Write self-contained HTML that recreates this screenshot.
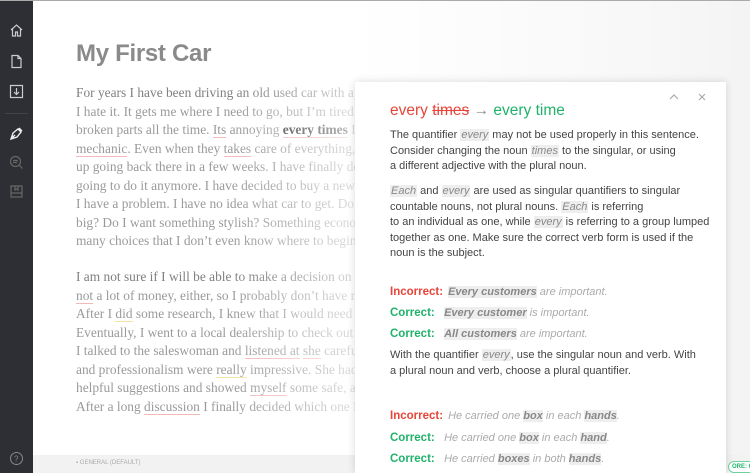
<!DOCTYPE html>
<html><head><style>
*{margin:0;padding:0;box-sizing:border-box}
body{width:750px;height:473px;overflow:hidden;background:#fff;position:relative;font-family:"Liberation Sans",sans-serif}
.top{position:absolute;left:0;top:0;width:750px;height:1px;background:#aaa}
.side{position:absolute;left:0;top:1px;width:33px;height:472px;background:#2d2f34}
.side svg{position:absolute;left:9px}
.main{position:absolute;left:33px;top:1px;width:717px;height:472px;background:linear-gradient(90deg,#fff 0,#fff 320px,#f8f8f8 600px,#f4f4f4)}
h1{position:absolute;left:76px;top:40px;font-size:24px;color:#8a8a8a;font-weight:bold;letter-spacing:-0.3px}
.txt{position:absolute;left:76px;font-family:"Liberation Serif",serif;font-size:13.4px;line-height:18.5px;color:#9a9a9a;white-space:nowrap;width:290px;overflow:hidden}
.txt .d{color:#808080}
.u{border-bottom:1.5px solid #f3b9b9}
.y{border-bottom:1.5px solid #f4e4a0}
.fade{position:absolute;left:230px;top:80px;width:130px;height:340px;background:linear-gradient(90deg,rgba(255,255,255,0),rgba(255,255,255,.7))}
.bot{position:absolute;left:33px;top:455px;width:717px;height:18px;background:#f2f2f2;font-size:6px;color:#aaa;padding:5px 0 0 43px}
.panel{position:absolute;left:355px;top:82px;width:371px;height:391px;background:#fff;box-shadow:0 0 8px rgba(0,0,0,.15);color:#444;font-size:11px}
.panel p{position:absolute;left:35px;line-height:15.6px;white-space:nowrap}
.h{background:#eee;color:#888;font-style:italic;padding:0 1px}
.ti{position:absolute;left:35px;top:20px;font-size:15.5px}
.r{color:#e8443a}.g{color:#20b26a}
.lab{font-weight:bold;display:inline-block;width:55px;font-size:11.5px}
.ex{color:#aaa;font-style:italic}
.ex b{background:#eee;color:#888}
.score{position:absolute;left:728px;top:461px;width:28px;height:12px;border:1px solid #6cd29c;border-radius:7px;font-size:6px;color:#20b26a;font-weight:bold;padding:2px 0 0 3px;background:#fff;white-space:nowrap;overflow:hidden}
</style></head><body>
<div class="top"></div>
<div class="side">
<svg style="top:22px" width="15" height="15" viewBox="0 0 15 15" fill="none" stroke="#ccc" stroke-width="1.2"><path d="M2 7L7.5 2 13 7M3.5 6v7h3v-4h2v4h3V6"/></svg>
<svg style="top:53px" width="15" height="15" viewBox="0 0 15 15" fill="none" stroke="#ccc" stroke-width="1.2"><path d="M3 1.5h6l3 3v9H3z M9 1.5v3h3"/></svg>
<svg style="top:83px" width="15" height="15" viewBox="0 0 15 15" fill="none" stroke="#ccc" stroke-width="1.2"><path d="M1.5 1.5h12v12h-12z M7.5 4v6 M5 8l2.5 2.5L10 8"/></svg>
<div style="position:absolute;left:5px;top:112px;width:23px;height:1px;background:#444"></div>
<svg style="top:125px" width="15" height="15" viewBox="0 0 15 15" fill="none" stroke="#eee" stroke-width="1.4"><path d="M2 13l2-6 5-4 3 3-4 5z M2 13l4-4 M10 2l3 3"/></svg>
<svg style="top:154px" width="15" height="15" viewBox="0 0 15 15" fill="none" stroke="#666" stroke-width="1.2"><circle cx="6.5" cy="6.5" r="5"/><path d="M10 10l3.5 3.5 M4 5.5h5M4 7.5h4"/></svg>
<svg style="top:183px" width="15" height="15" viewBox="0 0 15 15" fill="none" stroke="#666" stroke-width="1.2"><path d="M2 2h11v11H2z M2 9h11 M6 2v4l1.5-1 1.5 1V2"/></svg>
<svg style="top:450px" width="15" height="15" viewBox="0 0 15 15" fill="none" stroke="#888" stroke-width="1"><circle cx="7.5" cy="7.5" r="6"/><text x="5" y="10.5" font-size="8" fill="#888" stroke="none" font-family="Liberation Sans">?</text></svg>
</div>
<div class="main"></div>
<h1>My First Car</h1>
<div class="txt" style="top:84px"><span class="d">For years I have been driving an old used car with a l</span><br>I hate it. It gets me where I need to go, but I’m tired o<br>broken parts all the time. <span class="u">Its</span> annoying <b class="u" style="color:#333">every times</b> I<br><span class="u">mechanic</span>. Even when they <span class="u">takes</span> care of everything,<br>up going back there in a few weeks. I have finally dec<br>going to do it anymore. I have decided to buy a new c<br>I have a problem. I have no idea what car to get. Do I<br>big? Do I want something stylish? Something econom<br>many choices that I don’t even know where to begin</div>
<div class="txt" style="top:268px"><span class="d">I am not sure if I will be able to make a decision on m</span><br><span class="u">not</span> a lot of money, either, so I probably don’t have m<br>After I <span class="y">did</span> some research, I knew that I would need s<br>Eventually, I went to a local dealership to check out s<br>I talked to the saleswoman and <span class="u">listened at</span> <span class="u">she</span> carefu<br>and professionalism were <span class="y">really</span> impressive. She had<br>helpful suggestions and showed <span class="u">myself</span> some safe, af<br>After a long <span class="u">discussion</span> I finally decided which one I w</div>
<div class="fade"></div>
<div class="bot">▪ GENERAL (DEFAULT)</div>
<div class="panel">
<svg style="position:absolute;left:314px;top:12px" width="10" height="6" fill="none" stroke="#aaa" stroke-width="1.2"><path d="M1 5l4-4 4 4"/></svg>
<svg style="position:absolute;left:343px;top:11px" width="8" height="8" fill="none" stroke="#aaa" stroke-width="1.2"><path d="M1 1l6 6M7 1L1 7"/></svg>
<div class="ti"><span class="r">every <s>times</s></span> <span style="color:#888">→</span> <span class="g">every time</span></div>
<p style="top:46px">The quantifier <span class="h">every</span> may not be used properly in this sentence.<br>Consider changing the noun <span class="h">times</span> to the singular, or using<br>a different adjective with the plural noun.</p>
<p style="top:102px"><span class="h">Each</span> and <span class="h">every</span> are used as singular quantifiers to singular<br>countable nouns, not plural nouns. <span class="h">Each</span> is referring<br>to an individual as one, while <span class="h">every</span> is referring to a group lumped<br>together as one. Make sure the correct verb form is used if the<br>noun is the subject.</p>
<p style="top:203px"><span class="lab r">Incorrect:</span> <span class="ex"><b>Every customers</b> are important.</span></p>
<p style="top:224px"><span class="lab g" style="width:51px">Correct:</span> <span class="ex"><b>Every customer</b> is important.</span></p>
<p style="top:245px"><span class="lab g" style="width:51px">Correct:</span> <span class="ex"><b>All customers</b> are important.</span></p>
<p style="top:266px">With the quantifier <span class="h">every</span>, use the singular noun and verb. With<br>a plural noun and verb, choose a plural quantifier.</p>
<p style="top:327px"><span class="lab r">Incorrect:</span> <span class="ex">He carried one <b>box</b> in each <b>hands</b>.</span></p>
<p style="top:349px"><span class="lab g" style="width:51px">Correct:</span> <span class="ex">He carried one <b>box</b> in each <b>hand</b>.</span></p>
<p style="top:370px"><span class="lab g" style="width:51px">Correct:</span> <span class="ex">He carried <b>boxes</b> in both <b>hands</b>.</span></p>
</div>
<div class="score">ORE: 62</div>
</body></html>
